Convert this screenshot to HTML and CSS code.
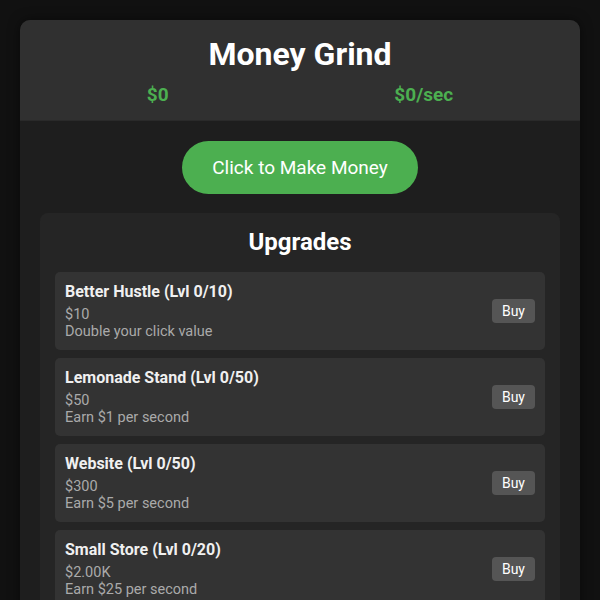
FILE: index.html
```html
<!DOCTYPE html>
<html lang="en">
<head>
<meta charset="utf-8">
<title>Money Grind</title>
<link rel="stylesheet" href="styles.css">
</head>
<body>
<div class="game">
  <header class="header">
    <h1 class="title">Money Grind</h1>
    <div class="stats">
      <span class="stat">$0</span>
      <span class="stat">$0/sec</span>
    </div>
  </header>
  <div class="main">
    <button class="click-btn">Click to Make Money</button>
    <section class="upgrades">
      <h2 class="upgrades-title">Upgrades</h2>
      <div class="list">
        <div class="item">
          <div class="info">
            <div class="name">Better Hustle (Lvl 0/10)</div>
            <div class="cost">$10</div>
            <div class="desc">Double your click value</div>
          </div>
          <button class="buy">Buy</button>
        </div>
        <div class="item">
          <div class="info">
            <div class="name">Lemonade Stand (Lvl 0/50)</div>
            <div class="cost">$50</div>
            <div class="desc">Earn $1 per second</div>
          </div>
          <button class="buy">Buy</button>
        </div>
        <div class="item">
          <div class="info">
            <div class="name">Website (Lvl 0/50)</div>
            <div class="cost">$300</div>
            <div class="desc">Earn $5 per second</div>
          </div>
          <button class="buy">Buy</button>
        </div>
        <div class="item">
          <div class="info">
            <div class="name">Small Store (Lvl 0/20)</div>
            <div class="cost">$2.00K</div>
            <div class="desc">Earn $25 per second</div>
          </div>
          <button class="buy">Buy</button>
        </div>
      </div>
    </section>
  </div>
</div>
</body>
</html>
```

FILE: styles.css
```css
html, body {
  margin: 0;
  padding: 0;
  background: #111111;
  font-family: Roboto, "Noto Sans", sans-serif;
  color: #eeeeee;
}
body {
  padding: 20px;
}
.game {
  background: #1e1e1e;
  border-radius: 10px;
  overflow: hidden;
  box-shadow: 0 0 12px rgba(0,0,0,0.5);
}
.header {
  background: #303030;
  padding: 15px 14px 14px;
  text-align: center;
  border-bottom: 1px solid #2a2a2a;
}
.title {
  margin: 0;
  font-size: 32px;
  font-weight: 700;
  color: #ffffff;
  line-height: 1.2;
}
.stats {
  display: flex;
  justify-content: space-around;
  margin-top: 10px;
}
.stat {
  color: #4caf50;
  font-weight: 700;
  font-size: 19px;
}
.main {
  padding: 20px;
  display: flex;
  flex-direction: column;
  align-items: center;
}
.click-btn {
  background: #4caf50;
  color: #ffffff;
  border: none;
  border-radius: 30px;
  padding: 15px 30px;
  font-family: inherit;
  font-size: 19px;
  line-height: 23px;
  cursor: pointer;
}
.upgrades {
  align-self: stretch;
  margin-top: 19px;
  background: #252525;
  border-radius: 8px;
  padding: 15px;
}
.upgrades-title {
  margin: 0 0 15px;
  text-align: center;
  font-size: 24px;
  font-weight: 700;
  color: #ffffff;
  line-height: 1.2;
}
.list {
  display: flex;
  flex-direction: column;
  gap: 8px;
}
.item {
  background: #333333;
  border-radius: 5px;
  padding: 10px;
  display: flex;
  align-items: center;
  justify-content: space-between;
}
.name {
  font-size: 16px;
  font-weight: 700;
  color: #f0f0f0;
  margin-bottom: 5px;
}
.cost, .desc {
  font-size: 14.5px;
  color: #aaaaaa;
  line-height: 17px;
}
.buy {
  background: #555555;
  color: #ffffff;
  border: none;
  border-radius: 4px;
  padding: 4px 10px;
  font-family: inherit;
  font-size: 14px;
  line-height: 16px;
}
```
